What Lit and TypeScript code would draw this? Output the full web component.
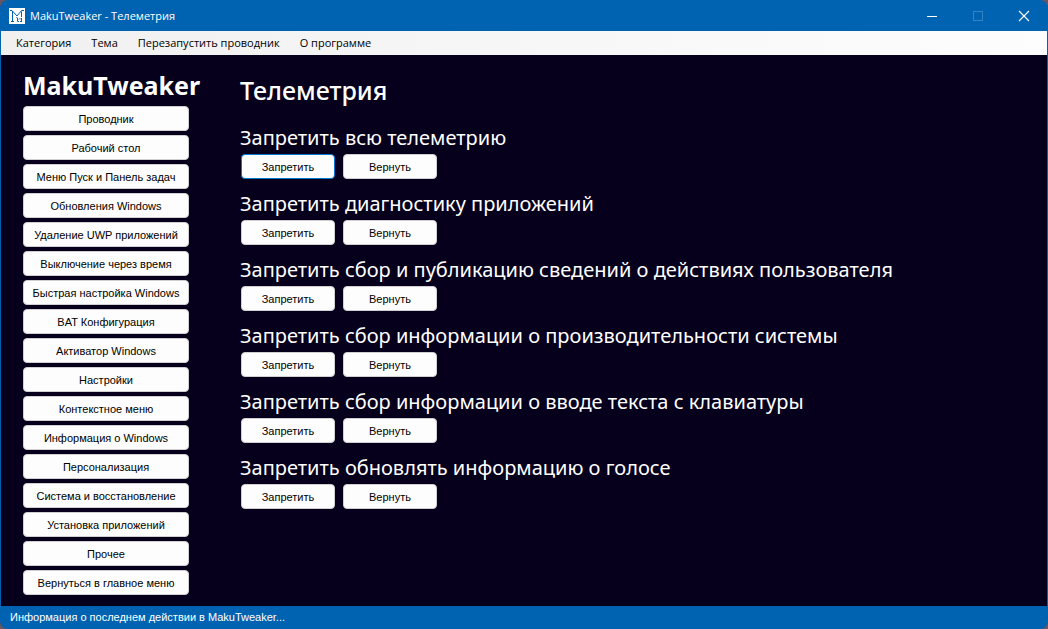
import { LitElement, html, css } from "lit";
import { customElement, state } from "lit/decorators.js";

const MENU = ["Категория", "Тема", "Перезапустить проводник", "О программе"];

const CATEGORIES = [
  "Проводник",
  "Рабочий стол",
  "Меню Пуск и Панель задач",
  "Обновления Windows",
  "Удаление UWP приложений",
  "Выключение через время",
  "Быстрая настройка Windows",
  "BAT Конфигурация",
  "Активатор Windows",
  "Настройки",
  "Контекстное меню",
  "Информация о Windows",
  "Персонализация",
  "Система и восстановление",
  "Установка приложений",
  "Прочее",
  "Вернуться в главное меню",
];

const TWEAKS = [
  "Запретить всю телеметрию",
  "Запретить диагностику приложений",
  "Запретить сбор и публикацию сведений о действиях пользователя",
  "Запретить сбор информации о производительности системы",
  "Запретить сбор информации о вводе текста с клавиатуры",
  "Запретить обновлять информацию о голосе",
];

@customElement("app-root")
export class AppRoot extends LitElement {
  @state() private active = "0-deny";

  static styles = css`
    :host {
      display: block;
      height: 100vh;
      background: #6b5560;
      font-family: "Noto Sans", "Open Sans", sans-serif;
      color: #fff;
    }
    * {
      box-sizing: border-box;
    }
    button {
      font: inherit;
      color: inherit;
      margin: 0;
      padding: 0;
      border: 0;
      background: none;
      white-space: nowrap;
    }
    .window {
      display: flex;
      flex-direction: column;
      height: 100%;
      border-radius: 8px;
      overflow: hidden;
      background: #0063b1;
    }
    .titlebar {
      display: flex;
      align-items: center;
      height: 31px;
      flex: none;
      padding: 0 1px 0 9px;
    }
    .logo {
      width: 16px;
      height: 16px;
      margin-right: 5px;
    }
    .title {
      flex: 1;
      font-family: "Open Sans", sans-serif;
      font-size: 11px;
      line-height: 16px;
    }
    .caption {
      width: 46px;
      height: 31px;
      display: grid;
      place-items: center;
    }
    .caption svg {
      width: 12px;
      height: 12px;
    }
    .menubar {
      display: flex;
      align-items: center;
      gap: 20px;
      height: 24px;
      flex: none;
      margin: 0 1px;
      padding-left: 15px;
      background: linear-gradient(90deg, #f0f0f0, #fdfdfd);
      color: #000;
      font-family: "Open Sans", sans-serif;
      font-size: 11px;
      line-height: 16px;
    }
    .body {
      flex: 1;
      min-height: 0;
      display: flex;
      gap: 38px;
      margin: 0 1px;
      padding: 12px 22px 0;
      background: #06001c;
    }
    .sidebar {
      width: 179px;
      flex: none;
    }
    .brand {
      margin: 0 0 3px;
      font-size: 25px;
      line-height: 36px;
      font-weight: 700;
      white-space: nowrap;
    }
    .nav {
      display: flex;
      flex-direction: column;
      gap: 4px;
      width: 166px;
    }
    .btn {
      height: 25px;
      border: 1px solid #d0d0d0;
      border-radius: 4px;
      background: #fdfdfd;
      color: #000;
      font-family: "Liberation Sans", Arial, sans-serif;
      font-size: 11px;
      line-height: 16px;
    }
    .btn.active {
      border-color: #0078d4;
    }
    .content {
      flex: 1;
      min-width: 0;
    }
    .page {
      margin: 5px 0 15px;
      font-size: 25px;
      line-height: 36px;
      font-weight: 500;
    }
    .tweaks {
      display: grid;
      gap: 10px;
    }
    .tweak {
      margin: 0 0 1px;
      font-size: 20px;
      line-height: 30px;
      font-weight: 400;
      white-space: nowrap;
    }
    .actions {
      display: flex;
      gap: 8px;
      padding-left: 1px;
    }
    .actions .btn {
      width: 94px;
    }
    .status {
      flex: none;
      height: 23px;
      padding-left: 10px;
      font-family: "Liberation Sans", Arial, sans-serif;
      font-size: 11px;
      line-height: 23px;
    }
  `;

  private action(id: string, label: string) {
    return html`<button
      class="btn ${this.active === id ? "active" : ""}"
      @click=${() => (this.active = id)}
    >${label}</button>`;
  }

  render() {
    return html`
      <div class="window">
        <header class="titlebar">
          <svg class="logo" viewBox="0 0 16 16" aria-hidden="true">
            <path fill="#fff" d="M0 0h16v16H0z" />
            <path
              fill="none"
              stroke="#0063b1"
              d="M1 2.500H3L8 8l4.500-5.500H15M3.500 3v10.500M2 13.500h3M12.500 3.500V9M7.500 9l1.500 2M8.500 10.500v3M10 11.500l1-1 1 1M12.500 10v3.500M9 13.500h1M11 13.500h2"
            />
          </svg>
          <span class="title">MakuTweaker - Телеметрия</span>
          <button class="caption" aria-label="Свернуть">
            <svg viewBox="0 0 12 12"><path d="M1 6.500h10" stroke="#fff" /></svg>
          </button>
          <button class="caption" aria-label="Развернуть" disabled>
            <svg viewBox="0 0 12 12">
              <rect x="1.500" y="1.500" width="9" height="9" fill="none" stroke="#3384c4" />
            </svg>
          </button>
          <button class="caption" aria-label="Закрыть">
            <svg viewBox="0 0 12 12">
              <path d="M1 1l10 10M11 1L1 11" stroke="#fff" stroke-width="1.100" />
            </svg>
          </button>
        </header>
        <nav class="menubar">${MENU.map((m) => html`<button>${m}</button>`)}</nav>
        <div class="body">
          <aside class="sidebar">
            <h1 class="brand">MakuTweaker</h1>
            <nav class="nav">
              ${CATEGORIES.map((c) => html`<button class="btn">${c}</button>`)}
            </nav>
          </aside>
          <main class="content">
            <h2 class="page">Телеметрия</h2>
            <div class="tweaks">
              ${TWEAKS.map(
                (t, i) => html`<section>
                  <h3 class="tweak">${t}</h3>
                  <div class="actions">
                    ${this.action(`${i}-deny`, "Запретить")}
                    ${this.action(`${i}-restore`, "Вернуть")}
                  </div>
                </section>`
              )}
            </div>
          </main>
        </div>
        <footer class="status">Информация о последнем действии в MakuTweaker...</footer>
      </div>
    `;
  }
}
